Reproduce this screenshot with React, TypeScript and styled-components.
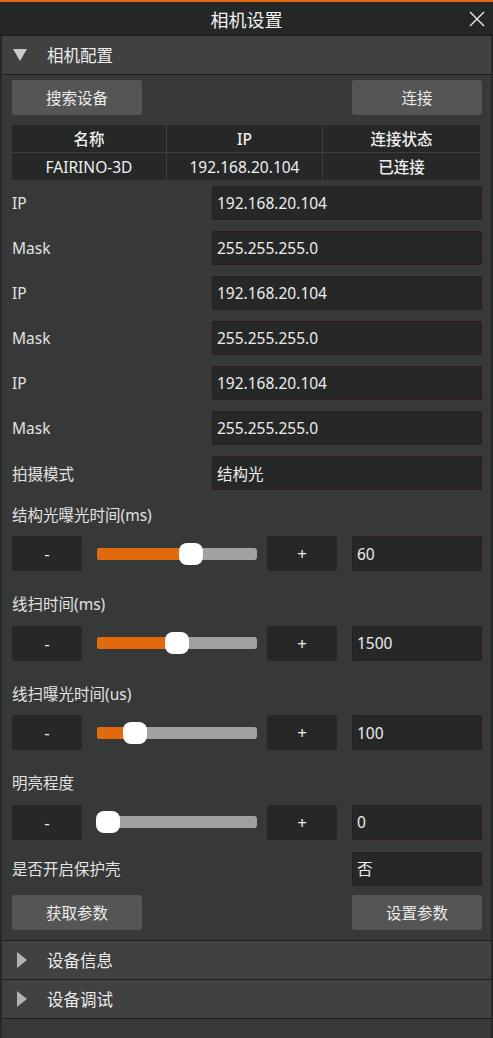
import React from 'react';
import styled, { createGlobalStyle } from 'styled-components';

const FONT = '"Noto Sans", "Noto Sans CJK SC", sans-serif';

const GlobalStyle = createGlobalStyle`
  html, body {
    margin: 0;
    padding: 0;
    background: #2b2c2c;
  }
  * {
    box-sizing: border-box;
  }
`;

const Window = styled.div`
  width: 493px;
  height: 1038px;
  overflow: hidden;
  border-top: 2px solid #e5680f;
  background: #262828;
  font-family: ${FONT};
  color: #e6e6e6;
  display: flex;
  flex-direction: column;
`;

const TitleBar = styled.div`
  height: 34px;
  flex-shrink: 0;
  display: grid;
  grid-template-columns: 40px 1fr 40px;
  align-items: center;
  background: #252727;
  border-bottom: 1px solid #1b1c1c;
`;

const Title = styled.div`
  grid-column: 2;
  text-align: center;
  font-size: 18px;
  color: #f2f2f2;
`;

const CloseButton = styled.div`
  display: flex;
  justify-content: flex-end;
  padding-right: 8px;
`;

const Panel = styled.div`
  flex: 1;
  margin: 0 2px;
  background: #373838;
  display: flex;
  flex-direction: column;
`;

const SectionHeader = styled.div`
  height: 39px;
  flex-shrink: 0;
  display: flex;
  align-items: center;
  gap: 20px;
  padding-left: 11px;
  background: #404141;
  border-bottom: 1px solid #1d1e1e;
  font-size: 16.5px;
  color: #ececec;
`;

const Content = styled.div`
  padding: 5px 9px 10px 10px;
  display: flex;
  flex-direction: column;
  border-bottom: 1px solid #1d1e1e;
`;

const ButtonRow = styled.div`
  display: flex;
  justify-content: space-between;
  margin-bottom: ${(p: { $mb?: number }) => p.$mb ?? 0}px;
`;

const Button = styled.div`
  width: 130px;
  height: 35px;
  border-radius: 3px;
  background: #545555;
  display: flex;
  align-items: center;
  justify-content: center;
  font-size: 15.5px;
  color: #ececec;
`;

const Table = styled.div`
  width: 468px;
  display: grid;
  grid-template-columns: 154px 155px 157px;
  column-gap: 1px;
  row-gap: 1px;
  background: #3c3e3e;
  margin-bottom: 6px;
`;

const Cell = styled.div<{ $bold?: boolean }>`
  height: 27px;
  background: #262828;
  display: flex;
  align-items: center;
  justify-content: center;
  font-size: 15.5px;
  font-weight: ${(p) => (p.$bold ? 500 : 400)};
  color: #efefef;
`;

const FormRow = styled.div<{ $mt?: number; $mb?: number }>`
  display: flex;
  align-items: center;
  height: 34px;
  margin-top: ${(p) => p.$mt ?? 0}px;
  margin-bottom: ${(p) => p.$mb ?? 11}px;
`;

const Label = styled.div<{ $w?: number }>`
  width: ${(p) => p.$w ?? 200}px;
  font-size: 15.5px;
  color: #e2e2e2;
`;

const Field = styled.div<{ $w?: number }>`
  width: ${(p) => p.$w ?? 270}px;
  height: 34px;
  margin-left: auto;
  background: #262828;
  border: 1px solid #2e1c1c;
  border-radius: 2px;
  display: flex;
  align-items: center;
  padding-left: 4px;
  font-size: 15.5px;
  color: #ededed;
`;

const SliderLabel = styled.div<{ $mt: number }>`
  height: 24px;
  display: flex;
  align-items: center;
  font-size: 15.5px;
  color: #e2e2e2;
  margin-top: ${(p) => p.$mt}px;
  margin-bottom: 10px;
`;

const SliderRow = styled.div`
  display: flex;
  align-items: center;
  height: 35px;
`;

const StepButton = styled.div`
  width: 70px;
  height: 35px;
  border-radius: 3px;
  background: #262828;
  display: flex;
  align-items: center;
  justify-content: center;
  font-size: 17px;
  color: #eaeaea;
`;

const Track = styled.div`
  position: relative;
  width: 160px;
  height: 12px;
  margin: 0 10px 0 15px;
  border-radius: 3px;
  background: #a1a19f;
`;

const Fill = styled.div`
  position: absolute;
  left: 0;
  top: 0;
  bottom: 0;
  border-radius: 3px 0 0 3px;
  background: #e3690f;
`;

const Handle = styled.div`
  position: absolute;
  top: -5px;
  width: 24px;
  height: 22px;
  border-radius: 8px;
  background: #ffffff;
`;

const ValueField = styled(Field)`
  width: 130px;
  height: 35px;
`;

const Footer = styled.div`
  flex: 1;
`;

const DownTriangle = () => (
  <svg width="14" height="12" viewBox="0 0 14 12">
    <polygon points="0,0 14,0 7,12" fill="#c9c9c9" />
  </svg>
);

const RightTriangle = () => (
  <svg width="10" height="16" viewBox="0 0 10 16" style={{ marginLeft: 4 }}>
    <polygon points="0,0 10,8 0,16" fill="#b3b3b3" />
  </svg>
);

const CloseIcon = () => (
  <svg width="16" height="16" viewBox="0 0 16 16">
    <path d="M1 1 L15 15 M15 1 L1 15" stroke="#e8e8e8" strokeWidth="1.4" />
  </svg>
);

const network = [
  ['IP', '192.168.20.104'],
  ['Mask', '255.255.255.0'],
  ['IP', '192.168.20.104'],
  ['Mask', '255.255.255.0'],
  ['IP', '192.168.20.104'],
  ['Mask', '255.255.255.0'],
  ['拍摄模式', '结构光'],
];

const sliders = [
  { label: '结构光曝光时间(ms)', value: '60', pos: 94 },
  { label: '线扫时间(ms)', value: '1500', pos: 80 },
  { label: '线扫曝光时间(us)', value: '100', pos: 38 },
  { label: '明亮程度', value: '0', pos: 11 },
];

function Slider({ pos }: { pos: number }) {
  return (
    <Track>
      <Fill style={{ width: pos }} />
      <Handle style={{ left: pos - 12 }} />
    </Track>
  );
}

export default function App() {
  return (
    <>
      <GlobalStyle />
      <Window>
        <TitleBar>
          <Title>相机设置</Title>
          <CloseButton>
            <CloseIcon />
          </CloseButton>
        </TitleBar>
        <Panel>
          <SectionHeader>
            <DownTriangle />
            相机配置
          </SectionHeader>
          <Content>
            <ButtonRow $mb={10}>
              <Button>搜索设备</Button>
              <Button>连接</Button>
            </ButtonRow>
            <Table>
              <Cell $bold>名称</Cell>
              <Cell $bold>IP</Cell>
              <Cell $bold>连接状态</Cell>
              <Cell>FAIRINO-3D</Cell>
              <Cell>192.168.20.104</Cell>
              <Cell $bold>已连接</Cell>
            </Table>
            {network.map(([label, value], i) => (
              <FormRow key={i}>
                <Label>{label}</Label>
                <Field>{value}</Field>
              </FormRow>
            ))}
            {sliders.map((s, i) => (
              <React.Fragment key={s.label}>
                <SliderLabel $mt={i === 0 ? 1 : 20.5}>{s.label}</SliderLabel>
                <SliderRow>
                  <StepButton>-</StepButton>
                  <Slider pos={s.pos} />
                  <StepButton>+</StepButton>
                  <ValueField>{s.value}</ValueField>
                </SliderRow>
              </React.Fragment>
            ))}
            <FormRow $mt={12} $mb={9}>
              <Label>是否开启保护壳</Label>
              <Field $w={130}>否</Field>
            </FormRow>
            <ButtonRow>
              <Button>获取参数</Button>
              <Button>设置参数</Button>
            </ButtonRow>
          </Content>
          <SectionHeader>
            <RightTriangle />
            设备信息
          </SectionHeader>
          <SectionHeader>
            <RightTriangle />
            设备调试
          </SectionHeader>
          <Footer />
        </Panel>
      </Window>
    </>
  );
}
